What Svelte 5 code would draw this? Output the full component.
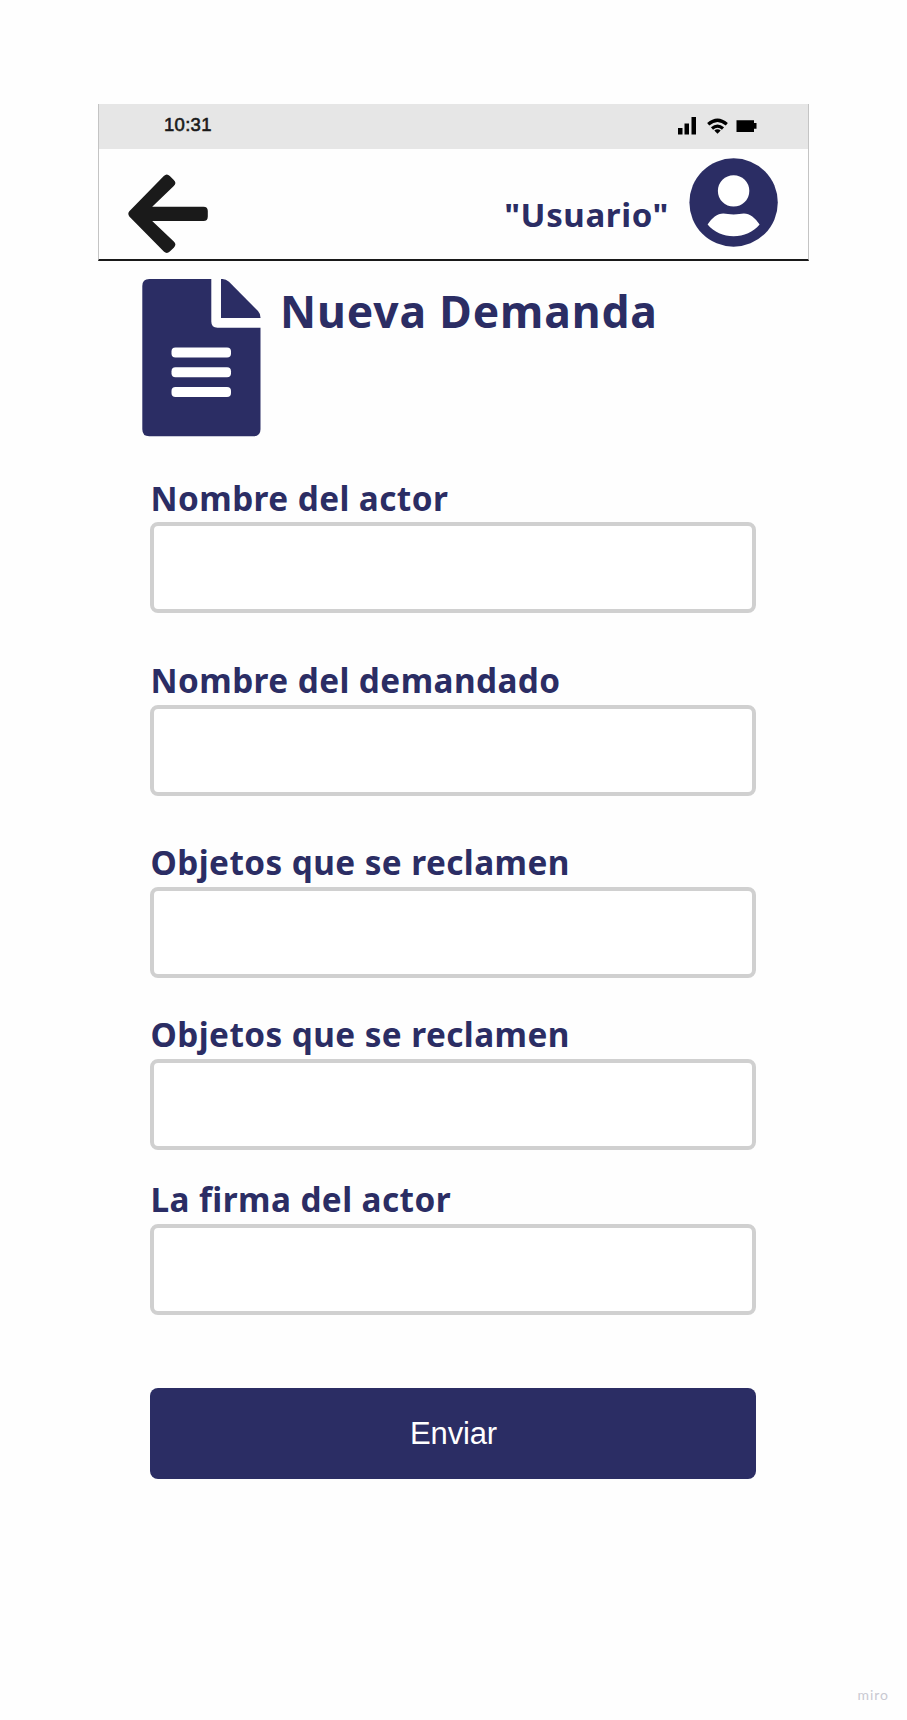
<script>
  const fields = [
    { id: 'actor', label: 'Nombre del actor' },
    { id: 'demandado', label: 'Nombre del demandado' },
    { id: 'objetos', label: 'Objetos que se reclamen' },
    { id: 'objetos-extra', label: 'Objetos que se reclamen' },
    { id: 'firma', label: 'La firma del actor' }
  ];
</script>

<main class="board">
  <div class="phone">
    <div class="status">
      <span class="time">10:31</span>
      <svg class="signals" width="80" height="20" viewBox="0 0 80 20">
        <path d="M0 12h4.500v6.500H0zM6.500 7.500H11v11H6.500zM13.500 1H18v17.500h-4.500z" />
        <g fill="none" stroke="#000" stroke-width="3.2">
          <path d="M30.200 8.300Q39.500 .2 48.800 8.300" />
          <path d="M34 12.500Q39.500 7.700 45 12.500" />
        </g>
        <path d="M36.300 14.500Q39.500 12 42.700 14.500L39.500 17.700z" />
        <path d="M58.500 4.300H76v2.800h2.500v5.700H76V16H58.500z" />
      </svg>
    </div>
    <header>
      <svg class="back" width="80" height="80" viewBox="-.5 0 80 80">
        <path
          d="M.8 37.200L35.300 2.100q3-3 6 0l4 3.900q3.200 3 0 6.100L23.700 32.700H75q4.300 0 4.300 4.300v5.500q0 4.500-4.300 4.500H23.700L45.300 67.500q3.200 3.100 0 6.200l-4 3.800q-3 2.900-6 0L.8 42.500q-2-2.700 0-5.300z"
        />
      </svg>
      <span class="user">"Usuario"</span>
      <svg class="avatar" width="89" height="89" viewBox="0 0 89 89">
        <circle cx="44.600" cy="44.500" r="44.200" fill="#2b2d64" />
        <circle cx="44.600" cy="32.900" r="15.700" fill="#fff" />
        <path
          d="M18.600 66.500C22.800 60 28.300 55.500 34.300 55.500c3.500 0 5.500 1 10.300 1s6.800-1 10.300-1C60.800 55.500 66.300 60 70.600 66.500 64.300 74 54.800 78.300 44.600 78.300S24.900 74 18.600 66.500z"
          fill="#fff"
        />
      </svg>
    </header>
  </div>

  <div class="heading">
    <svg width="119" height="158" viewBox="0 0 119 158" fill="#2b2d64">
      <path
        d="M7.300 0H69.300V42.500Q69.300 48.700 75.500 48.700H118.500V150.300Q118.500 157.300 111.500 157.300H7.300Q.3 157.300 .3 150.300V7Q.3 0 7.300 0z"
      />
      <path d="M79 0h1.500Q84 0 87 2.800L116 32q2.500 2.800 2.500 6.500v.500H79z" />
      <g fill="#fff">
        <rect x="29.500" y="68.500" width="59.500" height="10" rx="4" />
        <rect x="29.500" y="88.200" width="59.500" height="10" rx="4" />
        <rect x="29.500" y="107.900" width="59.500" height="10" rx="4" />
      </g>
    </svg>
    <h1>Nueva Demanda</h1>
  </div>

  <form>
    {#each fields as field}
      <div class="field">
        <label for={field.id}>{field.label}</label>
        <input id={field.id} type="text" />
      </div>
    {/each}
    <button type="button">Enviar</button>
  </form>

  <footer>miro</footer>
</main>

<style>
  :global(body) {
    margin: 0;
    background: #fff;
  }
  .board {
    box-sizing: border-box;
    width: 907px;
    height: 1720px;
    padding-top: 104px;
    display: flex;
    flex-direction: column;
    background: #fefefe;
    color: #2b2d64;
    font-family: 'Noto Sans', sans-serif;
  }
  .phone {
    box-sizing: border-box;
    width: 711px;
    height: 157px;
    margin-left: 98px;
    border: 1px solid #c4c4c4;
    border-top: 0;
    border-bottom: 2px solid #1a1a1a;
  }
  .status {
    display: flex;
    justify-content: space-between;
    height: 45px;
    padding: 0 50px 0 65px;
    background: #e6e6e6;
  }
  .time {
    color: #1a1a1a;
    font: 18.500px/42px 'Liberation Sans', Arial, sans-serif;
    letter-spacing: 0.300px;
    -webkit-text-stroke: 0.600px #1a1a1a;
  }
  .signals {
    margin-top: 12px;
  }
  header {
    display: flex;
    padding-left: 29px;
  }
  .back {
    margin-top: 25px;
    fill: #1a1a1a;
  }
  .user {
    margin: 43px 20px 0 auto;
    font-size: 33px;
    line-height: 46px;
    font-weight: 700;
    letter-spacing: 0.620px;
  }
  .avatar {
    margin: 9px 30px 0 0;
  }
  .heading {
    display: flex;
    height: 158px;
    margin: 18px 0 0 142px;
    gap: 19px;
  }
  h1 {
    margin: 0;
    font-size: 44.400px;
    line-height: 64px;
    font-weight: 700;
    letter-spacing: 0.880px;
  }
  form {
    display: flex;
    flex-direction: column;
    width: 606px;
    margin: 39px 0 0 150px;
  }
  .field {
    display: flex;
    flex-direction: column;
    height: 137px;
    margin-bottom: 46px;
  }
  .field:nth-child(2) {
    margin-bottom: 45px;
  }
  .field:nth-child(3) {
    margin-bottom: 35px;
  }
  .field:nth-child(4) {
    margin-bottom: 28px;
  }
  .field:nth-child(5) {
    margin-bottom: 73px;
  }
  label {
    height: 46px;
    padding-left: 0.500px;
    font-size: 33.300px;
    line-height: 42px;
    font-weight: 700;
    letter-spacing: 0.430px;
    white-space: nowrap;
  }
  .field:nth-child(1) label {
    line-height: 44px;
  }
  input {
    box-sizing: border-box;
    width: 606px;
    height: 91px;
    border: 4px solid #d0d0d0;
    border-radius: 8px;
    background: #fff;
    outline: 0;
  }
  button {
    height: 91px;
    padding: 0 0 0 1px;
    border: 0;
    border-radius: 8px;
    background: #2b2d64;
    color: #fff;
    font: 31px/88px 'Liberation Sans', Arial, sans-serif;
    letter-spacing: -0.150px;
  }
  footer {
    margin: auto 18px 15px auto;
    color: #c9c9d2;
    font: 400 14px/20px Lato, sans-serif;
    letter-spacing: 1px;
  }
</style>
